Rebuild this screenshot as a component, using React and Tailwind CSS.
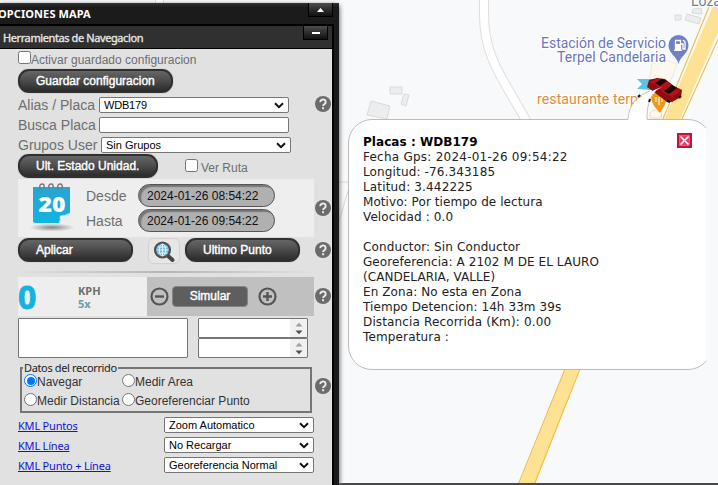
import React from 'react';

const arial = 'font-["Liberation_Sans",Arial,sans-serif]';
const verdana = 'font-["DejaVu_Sans",Verdana,sans-serif]';
const tahoma = 'font-["Noto_Sans",Tahoma,sans-serif]';

function Help({ className = '' }) {
  return (
    <svg className={`h-4 w-4 shrink-0 ${className}`} viewBox="0 0 16 16">
      <circle cx="8" cy="8" r="8" fill="#6b6b6b" />
      <path d="M5.3 6.1a2.7 2.5 0 1 1 4.3 1.9C8.5 8.700 8.100 9 8.100 10.100" fill="none" stroke="#ececec" strokeWidth="1.9" />
      <rect x="7.1" y="11.2" width="2" height="2" fill="#ececec" />
    </svg>
  );
}

function Select({ children, className = '' }) {
  return (
    <div className={`flex h-4 shrink-0 items-center justify-between rounded-[2px] border border-[#767676] bg-white pr-1 pl-1 text-black ${className}`}>
      <span className="text-[11px] leading-[14px] whitespace-nowrap">{children}</span>
      <svg className="h-[7px] w-[10px]" viewBox="0 0 10 7">
        <path d="M1 1.300 5 5.200 9 1.300" fill="none" stroke="#111" strokeWidth="2" />
      </svg>
    </div>
  );
}

function PillButton({ children, className = '' }) {
  return (
    <button
      className={`h-6 shrink-0 rounded-[11px] border-2 border-[#303030] bg-gradient-to-b from-[#666] via-[#4b4b4b] to-[#2c2c2c] text-left text-[12px] leading-[19px] whitespace-nowrap text-white shadow-[0_0_1px_#777] [-webkit-text-stroke:0.4px_white] ${className}`}
    >
      {children}
    </button>
  );
}

function Check() {
  return <span className="h-[13px] w-[13px] shrink-0 rounded-[2.5px] border border-[#767676] bg-white" />;
}

function Radio({ on }) {
  return (
    <span className={`flex h-[13px] w-[13px] shrink-0 items-center justify-center rounded-full border bg-white ${on ? 'border-[#0075ff]' : 'border-[#767676]'}`}>
      {on && <span className="h-[8px] w-[8px] rounded-full bg-[#0075ff]" />}
    </span>
  );
}

function DateField({ children }) {
  return (
    <div className="h-[23px] w-[137px] rounded-[12px] border border-[#555] bg-[#b0b0b0] pl-[8px] text-[12px] leading-[23px] whitespace-nowrap text-[#111] shadow-[inset_2px_2px_1px_#777]">
      {children}
    </div>
  );
}

function Spinner() {
  return (
    <div className="flex h-5 w-[110px] justify-end rounded-[1px] border border-[#767676] bg-white">
      <div className="flex w-[17px] items-center justify-center bg-[#f1f1f1]">
        <svg className="h-[13px] w-[8px]" viewBox="0 0 8 13">
          <path d="M0.5 4.500 4 .7 7.500 4.500z" fill="#a0a0a0" />
          <path d="M0.5 8.500 4 12.300 7.500 8.500z" fill="#505050" />
        </svg>
      </div>
    </div>
  );
}

function CalendarIcon() {
  return (
    <svg className="h-[54px] w-[48px]" viewBox="0 0 48 54">
      <defs>
        <linearGradient id="cal" x1="0" y1="0" x2="0" y2="1">
          <stop offset="0" stopColor="#2aa4cf" />
          <stop offset="1" stopColor="#10b4e2" />
        </linearGradient>
        <radialGradient id="calShadow">
          <stop offset="0" stopColor="#888" />
          <stop offset="1" stopColor="#888" stopOpacity="0" />
        </radialGradient>
      </defs>
      <ellipse cx="24" cy="48.5" rx="23" ry="4" fill="url(#calShadow)" />
      <path d="M5 8h37v26l-11 10H7q-2 0-2-2z" fill="url(#cal)" />
      <path d="M31 44q2-3 1-7 5 0 10-3z" fill="#f4f4f4" />
      <path d="M31 44q2-3 1-7 5 0 10-3" fill="none" stroke="#b5dce8" strokeWidth=".7" />
      <g fill="none" stroke="#777" strokeWidth="1.4">
        <path d="M12 10q-1-5 2-5t2 4M21 10q-1-5 2-5t2 4M30 10q-1-5 2-5t2 4" />
      </g>
      <text x="10.5" y="33" textLength="27" lengthAdjust="spacingAndGlyphs" fill="#fff" fontSize="21" fontWeight="800" fontFamily="Open Sans, sans-serif">20</text>
    </svg>
  );
}

function SearchGlobe() {
  return (
    <span className="flex h-[26px] w-8 items-center justify-center rounded-[6px] border border-[#d2d2d2] bg-[#e6e6e6]">
      <svg className="h-[21px] w-[22px]" viewBox="0 0 22 21">
        <path d="M14 14l5.500 5" stroke="#454545" strokeWidth="4" strokeLinecap="round" />
        <circle cx="9.5" cy="9" r="7.4" fill="#6bb9e0" stroke="#505050" strokeWidth="2.3" />
        <g fill="none" stroke="#eaf6fb" strokeWidth=".9">
          <path d="M9.500 3v12M3.500 9h12M4.500 6h10M4.500 12h10" />
          <ellipse cx="9.5" cy="9" rx="3.2" ry="6" />
        </g>
      </svg>
    </span>
  );
}

function RoundSign({ plus }) {
  return (
    <svg className="h-[19px] w-[19px] shrink-0" viewBox="0 0 19 19">
      <circle cx="9.5" cy="9.5" r="8" fill="none" stroke="#555" strokeWidth="2.2" />
      <path d={plus ? 'M5 9.5h9M9.5 5v9' : 'M5 9.5h9'} stroke="#555" strokeWidth="2.4" />
    </svg>
  );
}

function Map() {
  return (
    <svg className="absolute inset-0 h-[485px] w-[718px]" viewBox="0 0 718 485">
      <rect width="718" height="485" fill="#f7f9fa" />
      <path d="M160 0V10" stroke="#fff" strokeWidth="8" />
      <path d="M155.500 0V10M163.500 0V10" stroke="#ddd" />
      <path d="M484 -5V15C484 58 504 80 528 124" fill="none" stroke="#dcdedf" strokeWidth="10" />
      <path d="M484 -5V15C484 58 504 80 528 124" fill="none" stroke="#fff" strokeWidth="8" />
      <path d="M338 182H348M348 191 338 225" stroke="#d5d7d8" fill="none" />
      <path d="M653 56l24 8-10 27-18-6z" fill="#fdf8ed" stroke="#f0eadc" />
      <g fill="#ecedef" stroke="#d8dadc">
        <path d="M390 87h12v7h-12zM404 94l5 1-3 11-5-2zM371 101l19 5-3 13-20-4z" />
        <path d="M675 15h6v5h-6zM693 9l8-1 1 6-10-1zM687 14l14 4-2 6-14-4z" />
      </g>
      <path d="M723 -17 655 141 571 355 519 485H535L579 370 678 124 726 14z" fill="#fde293" />
      <path d="M709 7 663 119M565 369 518 485M719 37 682 119M580 369 534 485" fill="none" stroke="#f2bd45" strokeWidth="1.1" />
      <g fontFamily="Roboto, sans-serif" stroke="#fff" strokeWidth="2" paintOrder="stroke" fontSize="14">
        <text x="691" y="6" fill="#6b7f87">Loza</text>
        <text x="541" y="48" textLength="125" fill="#6a75bb">Estación de Servicio</text>
        <text x="557" y="62" textLength="109" fill="#6a75bb">Terpel Candelaria</text>
        <text x="537" y="104" textLength="112" fill="#dd8b3b">restaurante terpel</text>
      </g>
      <path d="M678.500 64C677 56 668.500 54 668.500 45a10 10 0 0 1 20 0C688.500 54 680 56 678.500 64z" fill="#7080c6" />
      <path d="M675.500 50V40.500h5V50M674 50.300h8M681 44h2v5h2v-7l-2-2" fill="none" stroke="#fff" strokeWidth="1.3" />
      <path d="M676 44h4v6h-4z" fill="#fff" />
      <path d="M637 79h17l-2 11-15-1 5-5z" fill="#5cc4e0" />
      <path d="M650 113l3-3 9 2-1 6h-11z" fill="#fff8ea" stroke="#ddd2b8" strokeWidth=".7" />
      <path d="M651 95q8-5 16 1 0 7-7 17-10-10-9-18z" fill="#ef9a16" />
      <path d="M656 97v5M659 97v8M662 97v5" stroke="#fff" strokeWidth="1.1" />
      <path d="M628 119C629 104 640 94 662 87 650 92 646 106 647 119z" fill="#fff" />
      <path d="M647 87 649 80 657 78 665 79 674 86 682 90 681 97 672 102 667 102 654 92z" fill="#8f0b0f" />
      <path d="M649 82l8-3 8 1 9 7 7 4-9 6-8-4-8-8z" fill="#b01217" />
      <path d="M655 83l7-4 5 2-7 5zM664 91l8-6 5 3-8 6z" fill="#150507" />
      <path d="M667 101l3 1M681 96l-2 2" stroke="#111" strokeWidth="2" />
      <path d="M635 106Q645 92 662 87 652 91 648 105z" fill="#fff" />
      <path d="M628 119C629 104 638 95 650 91M653 94C648 102 647 110 647 119" fill="none" stroke="#c4c4c4" />
      <path d="M638 97l2-2M649 102l1-3" stroke="#111" strokeWidth="2" />
    </svg>
  );
}

function Popup() {
  return (
    <div className="absolute top-[119px] left-[348px] h-[251px] w-[358px] overflow-hidden">
      <div className="h-[251px] w-[364px] rounded-[24px] border border-[#bcbcbc] bg-white" />
      <div className="absolute top-0 left-[280px] h-px w-[19px] bg-white" />
      <div className={`absolute top-[16px] left-[15px] text-[12px] leading-[15px] whitespace-nowrap text-[#222] ${verdana}`}>
        <p className="font-bold tracking-[0.05px] text-black">Placas : WDB179</p>
        <p className="tracking-[0.24px]">Fecha Gps: 2024-01-26 09:54:22</p>
        <p className="tracking-[0.14px]">Longitud: -76.343185</p>
        <p className="tracking-[0.16px]">Latitud: 3.442225</p>
        <p className="tracking-[0.07px]">Motivo: Por tiempo de lectura</p>
        <p className="tracking-[0.1px]">Velocidad : 0.0</p>
        <p>&nbsp;</p>
        <p className="tracking-[0.12px]">Conductor: Sin Conductor</p>
        <p className="tracking-[0.07px]">Georeferencia: A 2102 M DE EL LAURO</p>
        <p className="tracking-[0.05px]">(CANDELARIA, VALLE)</p>
        <p className="tracking-[0.1px]">En Zona: No esta en Zona</p>
        <p className="tracking-[0.07px]">Tiempo Detencion: 14h 33m 39s</p>
        <p className="tracking-[0.14px]">Distancia Recorrida (Km): 0.00</p>
        <p className="tracking-[0.15px]">Temperatura :</p>
      </div>
      <svg className="absolute top-[14px] left-[329px] h-[15px] w-[15px]" viewBox="0 0 15 15">
        <rect width="15" height="15" fill="#c8103a" />
        <rect x="2.500" y="2.500" width="10" height="10" fill="#d84468" stroke="#e08aa2" strokeWidth=".6" />
        <path d="M3.500 3.500l8 8M11.500 3.500l-8 8" stroke="#fff" strokeWidth="1.7" />
      </svg>
    </div>
  );
}

export default function App() {
  return (
    <div className={`relative h-[485px] w-[718px] overflow-hidden ${arial}`}>
      <Map />
      <div className="absolute bottom-0 left-0 h-[2px] w-[718px] bg-[#4a484b]" />
      <Popup />
      <div className="relative pt-[3px]">
        <div className="h-[482px] w-[339px] rounded-tr-[5px] bg-[#1b1b1b] shadow-[1px_1px_4px_#777]">
          <div className="flex h-[21px] justify-between bg-gradient-to-b from-[#333] to-[#1b1b1b] to-20% pr-[6px]">
            <h1 className={`-ml-[2px] text-[11px] leading-[22px] font-bold tracking-[0.1px] whitespace-nowrap text-white ${tahoma}`}>OPCIONES MAPA</h1>
            <span className="flex h-[14px] w-[25px] items-center justify-center border border-t-0 border-black bg-gradient-to-b from-[#4d4d4d] to-[#111]">
              <svg className="h-[4px] w-[7px]" viewBox="0 0 7 4"><path d="M0 4 3.500 0 7 4z" fill="#fff" /></svg>
            </span>
          </div>
          <div className="h-[461px] w-[334px] border-t-2 border-r-2 border-black bg-[#e1e1e1]">
            <div className="flex h-[23px] justify-between border-b border-black bg-[#303030] pr-1">
              <h2 className={`pl-[3px] text-[11px] leading-[24px] tracking-[-0.4px] whitespace-nowrap text-[#e6e6e6] [-webkit-text-stroke:0.35px_#e6e6e6] ${tahoma}`}>Herramientas de Navegacion</h2>
              <span className="flex h-[14px] w-[25px] items-center justify-center border border-t-0 border-black bg-gradient-to-b from-[#4d4d4d] to-[#111]">
                <span className="h-[2px] w-2 bg-white" />
              </span>
            </div>

            <div className="pl-[18px] text-[#6e6e6e]">
              <div className="flex h-5 pt-[2px]">
                <Check />
                <span className="pt-px text-[12px] leading-[17px] whitespace-nowrap">Activar guardado configuracion</span>
              </div>
              <div className="flex h-[28px]">
                <PillButton className="w-[155px] pl-4">Guardar configuracion</PillButton>
              </div>
              <div className="flex h-5">
                <span className="w-[81px] text-[14px] leading-[16px] whitespace-nowrap">Alias / Placa</span>
                <Select className="w-[190px]"><span className="tracking-[-0.2px]">WDB179</span></Select>
                <Help className="-mt-[1px] ml-[26px]" />
              </div>
              <div className="flex h-5">
                <span className="w-[81px] text-[14px] leading-[16px] whitespace-nowrap">Busca Placa</span>
                <span className="h-4 w-[190px] rounded-[2px] border border-[#767676] bg-white" />
              </div>
              <div className="flex h-[17px]">
                <span className="w-[83px] text-[14px] leading-[16px] whitespace-nowrap">Grupos User</span>
                <Select className="w-[190px]">Sin Grupos</Select>
              </div>
              <div className="flex h-[25px]">
                <PillButton className="w-[140px] pl-4">Ult. Estado Unidad.</PillButton>
                <span className="flex gap-[3px] pt-[5px] pl-[27px]">
                  <Check />
                  <span className="pt-px text-[12px] leading-[17px] whitespace-nowrap">Ver Ruta</span>
                </span>
              </div>
              <div className="flex h-[59px]">
                <div className="flex h-[58px] w-[296px] bg-[#eee]">
                  <div className="w-[68px] pl-[10px]"><CalendarIcon /></div>
                  <div className="flex w-[52px] flex-col pt-[5px] text-[14px] leading-[25px]">
                    <span>Desde</span>
                    <span>Hasta</span>
                  </div>
                  <div className="flex flex-col gap-[2px] pt-[5px]">
                    <DateField>2024-01-26 08:54:22</DateField>
                    <DateField>2024-01-26 09:54:22</DateField>
                  </div>
                </div>
                <Help className="mt-[21px] ml-px" />
              </div>
              <div className="flex h-[33px]">
                <PillButton className="w-[115px] pl-4">Aplicar</PillButton>
                <span className="mr-[5px] ml-[15px]"><SearchGlobe /></span>
                <PillButton className="w-[115px] pl-4">Ultimo Punto</PillButton>
                <Help className="mt-[4px] ml-[15px]" />
              </div>
              <div className="h-[2px] w-[296px] bg-gradient-to-r from-[#e1e1e1] via-[#b5b5b5] to-[#e1e1e1]" />
              <div className="mt-[4px] flex h-[41px]">
                <div className="flex h-[39px] w-[129px] bg-[#eee]">
                  <span className={`w-[60px] text-[32px] leading-[40px] font-bold text-[#15b1e1] [-webkit-text-stroke:0.8px_#15b1e1] ${tahoma}`}>0</span>
                  <span className={`flex flex-col pt-[7px] text-[11px] leading-[13px] font-bold ${tahoma}`}>
                    <span>KPH</span>
                    <span className="text-[#6c9aa8]">5x</span>
                  </span>
                </div>
                <div className="flex h-[39px] w-[167px] items-center bg-[#c0c0c0] pl-[3px]">
                  <RoundSign />
                  <button className="mr-[10px] ml-[3px] h-[21px] w-[76px] rounded-[4px] border border-[#858585] bg-[#5e5e5e] text-[12px] leading-[17px] text-white [-webkit-text-stroke:0.4px_white]">Simular</button>
                  <RoundSign plus />
                </div>
                <Help className="mt-[11px] ml-px" />
              </div>
              <div className="flex h-[43px] gap-[10px]">
                <div className="h-10 w-[170px] rounded-[1px] border border-[#767676] bg-white" />
                <div className="flex flex-col"><Spinner /><Spinner /></div>
              </div>
              <div className="flex h-[56px]">
                <fieldset className="ml-[2px] h-[52px] w-[292px] border-2 border-[#767676] px-[2px] text-[#333]">
                  <legend className={`-ml-px px-px text-[11px] leading-[13px] tracking-[-0.35px] whitespace-nowrap text-[#222] ${tahoma}`}>Datos del recorrido</legend>
                  <div className="grid h-[19px] grid-cols-[98px_1fr] text-[12px] leading-[17px] whitespace-nowrap">
                    <span className="flex"><Radio on />Navegar</span>
                    <span className="flex"><Radio />Medir Area</span>
                  </div>
                  <div className="grid grid-cols-[98px_1fr] text-[12px] leading-[17px] whitespace-nowrap">
                    <span className="flex"><Radio />Medir Distancia</span>
                    <span className="flex"><Radio />Georeferenciar Punto</span>
                  </div>
                </fieldset>
                <Help className="mt-[17px] ml-[3px]" />
              </div>
              {[
                ['KML Puntos', 'Zoom Automatico'],
                ['KML Línea', 'No Recargar'],
                ['KML Punto + Línea', 'Georeferencia Normal'],
              ].map(([link, option]) => (
                <div key={link} className="flex h-5">
                  <a className={`w-[146px] text-[11px] leading-[18px] tracking-[-0.2px] whitespace-nowrap text-[#1111dd] underline ${tahoma}`}>{link}</a>
                  <Select className="w-[150px]">{option}</Select>
                </div>
              ))}
            </div>
          </div>
        </div>
      </div>
    </div>
  );
}
